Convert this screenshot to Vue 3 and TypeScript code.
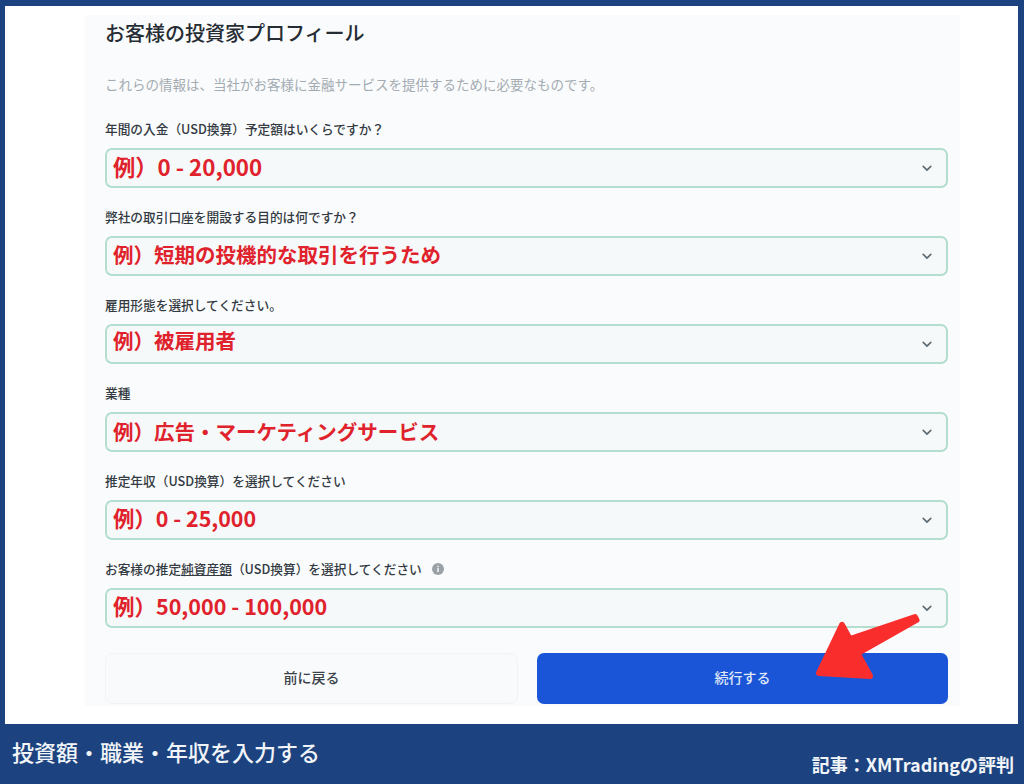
<script setup lang="ts">
interface Field { label: string; value: string; size: string; }
const fields: Field[] = [
  { label: '年間の入金（USD換算）予定額はいくらですか？', value: '例）0 - 20,000', size: 'num-a' },
  { label: '弊社の取引口座を開設する目的は何ですか？', value: '例）短期の投機的な取引を行うため', size: 'cjk' },
  { label: '雇用形態を選択してください。', value: '例）被雇用者', size: 'cjk raised' },
  { label: '業種', value: '例）広告・マーケティングサービス', size: 'cjk lowered' },
  { label: '推定年収（USD換算）を選択してください', value: '例）0 - 25,000', size: 'num-b' },
];
</script>

<template>
  <div class="page">
    <main class="frame">
      <section class="panel">
        <h1 class="title">お客様の投資家プロフィール</h1>
        <p class="sub">これらの情報は、当社がお客様に金融サービスを提供するために必要なものです。</p>
        <div v-for="f in fields" :key="f.label" class="field">
          <div class="label">{{ f.label }}</div>
          <div class="select">
            <span class="value" :class="f.size">{{ f.value }}</span>
            <svg class="chev" viewBox="0 0 12 8" width="10" height="7"><path d="M1.5 1.5 6 6l4.5-4.5" fill="none" stroke="#5f6b73" stroke-width="2" stroke-linecap="round" stroke-linejoin="round"/></svg>
          </div>
        </div>
        <div class="field">
          <div class="label"><span>お客様の推定<u>純資産額</u>（USD換算）を選択してください</span><svg class="info" viewBox="0 0 12 12" width="12" height="12"><circle cx="6" cy="6" r="6" fill="#9aa2a8"/><rect x="5.2" y="5" width="1.6" height="4" fill="#eef0f2"/><rect x="5.2" y="2.8" width="1.6" height="1.4" fill="#eef0f2"/></svg></div>
          <div class="select">
            <span class="value num-c">例）50,000 - 100,000</span>
            <svg class="chev" viewBox="0 0 12 8" width="10" height="7"><path d="M1.5 1.5 6 6l4.5-4.5" fill="none" stroke="#5f6b73" stroke-width="2" stroke-linecap="round" stroke-linejoin="round"/></svg>
          </div>
        </div>
        <div class="actions">
          <button class="btn back">前に戻る</button>
          <button class="btn next">続行する</button>
        </div>
      </section>
      <svg class="arrow" viewBox="0 0 120 80" width="120" height="80">
        <path d="M113 11 114.500 14 58 46 48 33 Z" fill="#fa2d2d" stroke="#fa2d2d" stroke-width="6" stroke-linejoin="round"/>
        <path d="M40 19 17 67 68 70 Z" fill="#fa2d2d" stroke="#fa2d2d" stroke-width="6" stroke-linejoin="round"/>
      </svg>
    </main>
    <footer class="footer">
      <span class="caption">投資額・職業・年収を入力する</span>
      <span class="credit">記事：XMTradingの評判</span>
    </footer>
  </div>
</template>

<style scoped>
.page {
  width: 1024px;
  height: 784px;
  display: flex;
  flex-direction: column;
  background: #1c437f;
  font-family: "Noto Sans CJK JP", "Noto Sans", sans-serif;
  overflow: hidden;
}
.frame {
  position: relative;
  height: 718px;
  margin: 6px 6px 0 5px;
  background: #fff;
  padding: 9px 58px 0 80px;
  box-sizing: border-box;
}
.panel {
  background: #fafbfc;
  height: 691px;
  padding: 0 12px 0 20px;
  box-sizing: border-box;
}
.title {
  margin: 0;
  font-size: 20px;
  line-height: 36px;
  font-weight: 500;
  color: #262c33;
}
.sub {
  margin: 21px 0 0;
  font-size: 13.5px;
  line-height: 24px;
  color: #a3abb2;
  height: 28px;
  white-space: nowrap;
}
.field {
  height: 88px;
  display: flex;
  flex-direction: column;
}
.label {
  height: 48px;
  box-sizing: border-box;
  display: flex;
  align-items: flex-end;
  padding-bottom: 10px;
  font-size: 12.7px;
  line-height: 18px;
  font-weight: 500;
  color: #333a42;
  white-space: nowrap;
}
.info { margin: 0 0 3px 10px; }
.select {
  height: 40px;
  box-sizing: border-box;
  border: 2px solid #b4decd;
  border-radius: 7px;
  background: #f6f9f9;
  display: flex;
  align-items: center;
  justify-content: space-between;
  padding: 0 14px 0 6px;
}
.value {
  font-weight: 700;
  line-height: 34px;
  color: #e0222c;
  margin-top: -5px;
}
.cjk { font-size: 20.5px; }
.raised { margin-top: -9px; }
.lowered { margin-top: -3px; }
.num-a { font-size: 22.3px; }
.num-b { font-size: 21.4px; }
.num-c { font-size: 21.5px; }
.actions {
  display: flex;
  gap: 19px;
  margin-top: 25px;
}
.btn {
  flex: 1;
  height: 51px;
  border-radius: 7px;
  font-family: inherit;
  font-size: 14px;
  font-weight: 500;
  padding: 0 0 3px;
}
.back {
  background: #f9fafb;
  border: 1px solid #f2f3f5;
  color: #3a4149;
}
.next {
  background: #1a55d8;
  border: none;
  color: #dfe7f7;
}
.arrow {
  position: absolute;
  left: 797px;
  top: 600px;
}
.footer {
  flex: 1;
  display: flex;
  justify-content: space-between;
  color: #f1f4f8;
}
.caption {
  margin: 12px 0 0 12px;
  font-size: 22px;
  line-height: 30px;
  font-weight: 500;
}
.credit {
  margin: 28px 10px 0 0;
  font-size: 18px;
  line-height: 24px;
  font-weight: 700;
}
</style>
